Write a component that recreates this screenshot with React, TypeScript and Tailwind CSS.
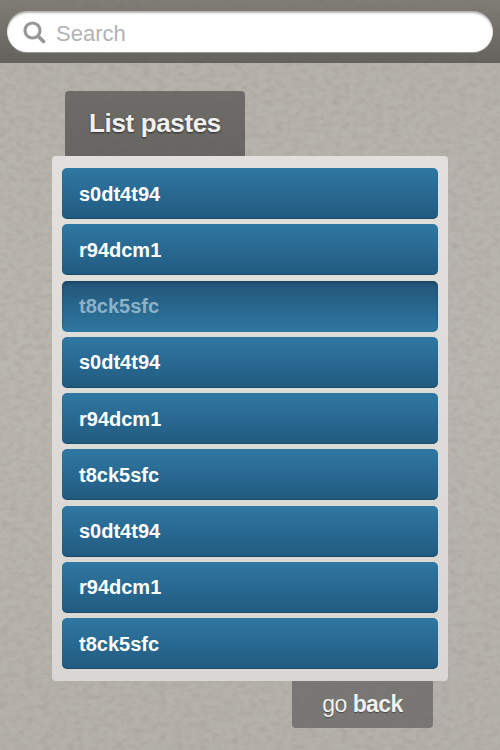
import React from "react";

const rows = ["s0dt4t94", "r94dcm1", "t8ck5sfc", "s0dt4t94", "r94dcm1", "t8ck5sfc", "s0dt4t94", "r94dcm1", "t8ck5sfc"];

function SearchIcon() {
  return (
    <svg width="24" height="24" viewBox="0 0 24 24" fill="none" className="shrink-0">
      <circle cx="10.5" cy="10.5" r="7.5" stroke="#97989c" strokeWidth="3.2" />
      <path d="M16 16 L21.5 21.5" stroke="#97989c" strokeWidth="3.8" strokeLinecap="round" />
    </svg>
  );
}

function PaperTexture() {
  return (
    <svg width="500" height="750" className="absolute inset-0 pointer-events-none">
      <filter id="paper" x="0" y="0" width="100%" height="100%">
        <feTurbulence type="fractalNoise" baseFrequency="0.12 0.18" numOctaves="4" seed="7" />
        <feColorMatrix type="matrix" values="0 0 0 0 0.30  0 0 0 0 0.27  0 0 0 0 0.22  0.4 0.4 0 0 -0.33" />
      </filter>
      <rect width="500" height="750" filter="url(#paper)" />
    </svg>
  );
}

export default function App() {
  return (
    <div className="relative w-[500px] h-[750px] overflow-hidden bg-gradient-to-b from-[#b4b1aa] via-[#bab7b0] to-[#b4b1aa] font-['Liberation_Sans',Arial,sans-serif]">
      <PaperTexture />
      <div className="relative flex flex-col">
        <header className="h-[63px] shrink-0 px-[7px] pt-[11px] bg-gradient-to-b from-[#5f5c56]/60 to-[#4a4843]/75">
          <div className="h-[41px] rounded-[21px] bg-white flex items-center pl-[15px] gap-[10px] shadow-[inset_0_2px_2px_rgba(0,0,0,0.3),0_1px_0_rgba(255,255,255,0.35)]">
            <SearchIcon />
            <span className="text-[22px] text-[#b2b2b2] leading-none pt-[4px]">Search</span>
          </div>
        </header>

        <main className="flex flex-col pt-[28px]">
          <div className="ml-[65px] w-[180px] h-[65px] rounded-t-[4px] bg-gradient-to-b from-[#5c5b58]/80 to-[#545350]/80 flex items-center justify-center">
            <h1 className="text-[26px] font-bold text-[#f1f1ef] tracking-[-0.35px] pb-[1px] [text-shadow:0_1px_2px_rgba(0,0,0,0.6)]">List pastes</h1>
          </div>
          <section className="ml-[52px] w-[396px] h-[525px] rounded-[4px] bg-gradient-to-b from-[#e2e0dc] to-[#d9d7d3] px-[10px] pt-[12px] flex flex-col gap-[5.25px]">
            {rows.map((r, i) =>
              i === 2 ? (
                <div key={i} className="h-[51px] shrink-0 rounded-[5px] pl-[17px] flex items-center bg-gradient-to-b from-[#225578] to-[#2f78a2] shadow-[inset_0_2px_3px_rgba(0,0,0,0.2)]">
                  <span className="text-[20px] font-bold text-[#8db2c8]">{r}</span>
                </div>
              ) : (
                <div key={i} className="h-[51px] shrink-0 rounded-[5px] pl-[17px] flex items-center bg-gradient-to-b from-[#2f78a2] to-[#225a80] shadow-[inset_0_-1px_1px_rgba(0,0,0,0.2)]">
                  <span className="text-[20px] font-bold text-white">{r}</span>
                </div>
              )
            )}
          </section>
          <div className="ml-[292px] w-[141px] h-[47px] rounded-b-[4px] bg-[#656462]/75 flex items-center justify-center gap-[6px] text-[23px] text-[#f1f1ef] tracking-[-0.55px] pb-[1px] [text-shadow:0_1px_1px_rgba(0,0,0,0.4)]">
            <span className="font-normal">go</span>
            <span className="font-bold">back</span>
          </div>
        </main>
      </div>
    </div>
  );
}
